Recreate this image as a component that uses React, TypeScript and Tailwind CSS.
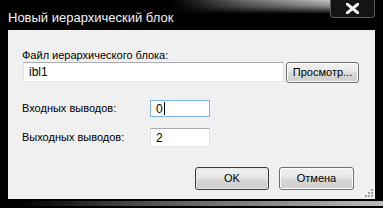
import React from 'react';

const font = { fontFamily: '"Liberation Sans", Arial, sans-serif' };

function Field({ value, focused, className }: { value: string; focused?: boolean; className: string }) {
  return (
    <div
      className={`flex items-center border bg-white pl-[5px] text-[12px] text-black ${
        focused ? 'border-[#7eb4ea]' : 'border-t-[#abadb3] border-x-[#dbdfe6] border-b-[#e3e9ef]'
      } ${className}`}
    >
      <span>{value}</span>
      {focused && <span className="ml-[1px] h-[13px] w-[1px] bg-black" />}
    </div>
  );
}

function Btn({ children, className, primary }: { children: React.ReactNode; className: string; primary?: boolean }) {
  return (
    <div
      className={`flex items-center justify-center rounded-[3px] border text-[11px] text-black ${
        primary ? 'border-[#3c3c3c] shadow-[inset_0_0_0_1px_#e8e8e8]' : 'border-[#707070] shadow-[inset_0_0_0_1px_#fcfcfc]'
      } bg-[linear-gradient(to_bottom,#f2f2f2,#e6e6e6_48%,#d8d8d8_52%,#cfcfcf)] ${className}`}
    >
      {children}
    </div>
  );
}

export default function App() {
  return (
    <div className="relative flex h-[208px] w-[383px] flex-col overflow-hidden bg-black" style={font}>
      {/* Title bar */}
      <div className="flex h-[30px] shrink-0 items-start pl-[8px] pr-[8px]">
        <span className="mt-[8px] text-[13px] text-[#f4f4f4] [text-shadow:0_0_4px_#000,0_0_8px_#000,0_0_12px_#000]">
          Новый иерархический блок
        </span>
        {/* glass highlight */}
        <div className="h-[14px] flex-1 bg-[#777] bg-[linear-gradient(to_right,#000_0%,#6a6a6a_45%,#c4c4c4_100%)]">
          <div className="h-full w-full bg-[linear-gradient(to_bottom,rgba(0,0,0,0)_0%,rgba(0,0,0,0.3)_45%,#000_100%)]" />
        </div>
        <div className="flex h-[18px] w-[45px] items-center justify-center rounded-b-[4px] border border-t-0 border-[#5a5a5a] bg-[#141414]">
          <svg width="13" height="11" viewBox="0 0 13 11">
            <path d="M1 1 L12 10 M12 1 L1 10" stroke="#f4f4f4" strokeWidth="3" strokeLinecap="square" />
          </svg>
        </div>
      </div>

      {/* Client area */}
      <div className="mx-[8px] flex h-[169px] shrink-0 flex-col bg-[#f0f0f0] px-[14px] pt-[19px] text-[11px] text-black">
        <div className="leading-[13px]">Файл иерархического блока:</div>
        <div className="flex items-start gap-[2px] pl-[1px]">
          <Field value="ibl1" className="h-[20px] w-[261px]" />
          <Btn className="h-[21px] w-[73px]">Просмотр...</Btn>
        </div>

        <div className="mt-[17px] flex items-center">
          <span className="w-[128px]">Входных выводов:</span>
          <Field value="0" focused className="h-[17px] w-[60px]" />
        </div>
        <div className="mt-[11px] flex items-center">
          <span className="w-[128px]">Выходных выводов:</span>
          <Field value="2" className="h-[19px] w-[60px]" />
        </div>

        <div className="mt-[20px] flex justify-end gap-[10px] pr-[7px]">
          <Btn primary className="h-[23px] w-[74px]">OK</Btn>
          <Btn className="h-[23px] w-[75px]">Отмена</Btn>
        </div>

        {/* size grip */}
        <div className="absolute right-[10px] top-[189px] grid grid-cols-3 gap-[1px]">
          {[0, 0, 1, 0, 1, 1, 1, 1, 1].map((v, i) => (
            <span key={i} className={`h-[2px] w-[2px] ${v ? 'bg-[#a0a0a0]' : ''}`} />
          ))}
        </div>
      </div>

      {/* Bottom frame */}
      <div className="mt-[2px] h-[5px] bg-[linear-gradient(to_right,#000_5%,#555_40%,#bbb)]" />
    </div>
  );
}
